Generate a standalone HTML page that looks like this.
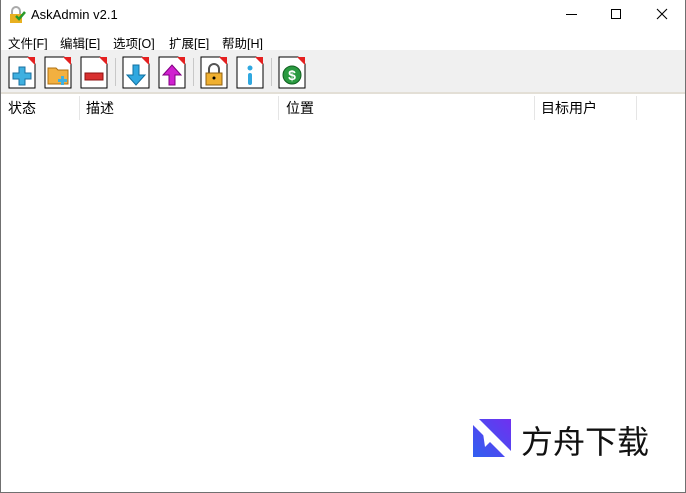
<!DOCTYPE html><html><head><meta charset="utf-8"><style>
*{margin:0;padding:0;box-sizing:border-box}
body{width:686px;height:493px;overflow:hidden;background:#fff;font-family:"Liberation Sans","Noto Sans CJK SC",sans-serif;font-size:12px;color:#000;position:relative}
.win{position:absolute;left:0;top:0;width:686px;height:493px;border:1px solid #707070;border-top:none}
.a{position:absolute;white-space:nowrap}
.tb{position:absolute;left:1px;top:50px;width:684px;height:44px;background:#f0f0f0;border-bottom:2px solid #e3dfd6}
.ic{position:absolute;top:56px;width:28px;height:33px}
.sep{position:absolute;top:58px;width:1px;height:28px;background:#c8c8c8}
.hd{position:absolute;top:96px;height:24px;width:1px;background:#e5e5e5}
.m{font-size:12.5px;top:33px}
.h{top:98px;font-size:14px}
</style></head><body><div class="win"></div>
<svg class="a" style="left:8px;top:6px" width="18" height="18" viewBox="0 0 18 18"><path d="M4 8V5a4 4 0 0 1 8 0v3" stroke="#aaa" stroke-width="2" fill="none"/><rect x="2" y="8" width="12" height="9" fill="#e8b020"/><path d="M8 10l3 3 6-7" stroke="#2a9a2a" stroke-width="2.5" fill="none"/></svg>
<div class="a" style="left:31px;top:7px;font-size:13px">AskAdmin v2.1</div>
<div class="a" style="left:566px;top:14px;width:11px;height:1px;background:#000"></div>
<div class="a" style="left:611px;top:9px;width:10px;height:10px;border:1px solid #000"></div>
<svg class="a" style="left:656px;top:8px" width="12" height="12"><path d="M1 1L11 11M11 1L1 11" stroke="#000" stroke-width="1.1"/></svg>
<div class="a m" style="left:8px">文件[F]</div><div class="a m" style="left:60px">编辑[E]</div><div class="a m" style="left:113px">选项[O]</div><div class="a m" style="left:169px">扩展[E]</div><div class="a m" style="left:222px">帮助[H]</div>
<div class="tb"></div>
<svg width="0" height="0" style="position:absolute"><defs><g id="pg"><path d="M1 1H20L27 8V32H1Z" fill="#fff" stroke="#000"/><path d="M19 1H27V9Z" fill="#e52020"/></g></defs></svg>
<svg class="ic" style="left:8px"><use href="#pg"/><path d="M11 11h6v6h6v6h-6v6h-6v-6H5v-6h6z" fill="#3fb0e0" stroke="#1a70a0"/></svg>
<svg class="ic" style="left:44px"><use href="#pg"/><path d="M4 12h8l2 2h10v14H4z" fill="#f2b040" stroke="#b07010"/><path d="M17 20h3v3h3v3h-3v3h-3v-3h-3v-3h3z" fill="#3fb0e0"/></svg>
<svg class="ic" style="left:80px"><use href="#pg"/><rect x="5" y="17" width="18" height="7" fill="#d83030" stroke="#901010"/></svg>
<div class="sep" style="left:115px"></div>
<svg class="ic" style="left:122px"><use href="#pg"/><path d="M11 9h6v10h6l-9 10-9-10h6z" fill="#30a8e0" stroke="#1070a0"/></svg>
<svg class="ic" style="left:158px"><use href="#pg"/><path d="M11 29h6V19h6l-9-10-9 10h6z" fill="#d020d0" stroke="#800080"/></svg>
<div class="sep" style="left:193px"></div>
<svg class="ic" style="left:200px"><use href="#pg"/><path d="M9 17v-4a5 5 0 0 1 10 0v4" stroke="#555" stroke-width="2" fill="none"/><rect x="6" y="17" width="16" height="12" fill="#f0b030" stroke="#906010"/><circle cx="14" cy="22" r="1.5"/></svg>
<svg class="ic" style="left:236px"><use href="#pg"/><circle cx="14" cy="12" r="2.5" fill="#30a8e0"/><rect x="12" y="17" width="4" height="12" rx="2" fill="#30a8e0"/></svg>
<div class="sep" style="left:271px"></div>
<svg class="ic" style="left:278px"><use href="#pg"/><circle cx="14" cy="19" r="9" fill="#2a9a40" stroke="#106020"/><text x="14" y="24" font-size="14" font-weight="bold" fill="#fff" text-anchor="middle" font-family="Liberation Sans">$</text></svg>
<div class="a h" style="left:8px">状态</div>
<div class="a h" style="left:86px">描述</div>
<div class="a h" style="left:286px">位置</div>
<div class="a h" style="left:541px">目标用户</div>
<div class="hd" style="left:79px"></div><div class="hd" style="left:278px"></div><div class="hd" style="left:534px"></div><div class="hd" style="left:636px"></div>
<svg class="a" style="left:473px;top:419px" width="40" height="38"><defs><linearGradient id="g" x1="0" x2="1" y1="1" y2="0"><stop offset="0" stop-color="#3060f0"/><stop offset="1" stop-color="#7030f0"/></linearGradient></defs><rect width="38" height="38" fill="url(#g)"/><path d="M0 0H6L38 32V38H32L0 6Z" fill="#fff"/><path d="M10 14L18 22L12 28Z" fill="#fff"/></svg>
<div class="a" style="left:521px;top:417px;font-size:32px;letter-spacing:0px;color:#111">方舟下载</div>
</body></html>
